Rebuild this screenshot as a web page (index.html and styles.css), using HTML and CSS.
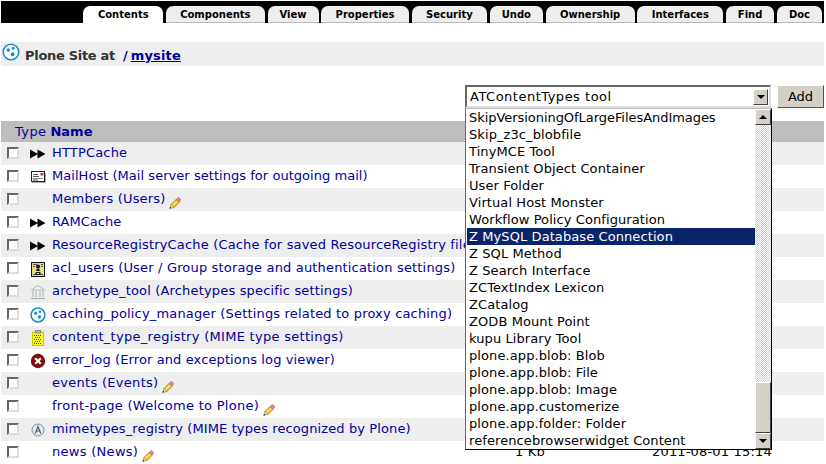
FILE: index.html
```html
<!DOCTYPE html>
<html lang="en">
<head>
<meta charset="utf-8">
<title>Plone Site at /mysite</title>
<link rel="stylesheet" href="styles.css">
</head>
<body>
<svg class="defs" width="0" height="0" aria-hidden="true">
  <symbol id="i-ff" viewBox="0 0 16 16"><path d="M0 3.500l8 4.500-8 4.500zM7.500 3.500l8 4.500-8 4.500z" fill="#000"/></symbol>
  <symbol id="i-mail" viewBox="0 0 16 16"><rect x="1.500" y="2.500" width="13" height="10" fill="#fff" stroke="#222"/><path d="M3 9.500h10" stroke="#888"/><path d="M3 5.500h5M3 7.500h6M3 11h5" stroke="#555"/><rect x="10.500" y="4" width="3" height="2.500" fill="#c33"/><path d="M2 13.500h13.500V4" stroke="#aaa" fill="none"/></symbol>
  <symbol id="i-pencil" viewBox="0 0 12 12"><path d="M2 7.500L7 2.500l3 3-5 5z" fill="#f5c82e" stroke="#7e6a18" stroke-width=".7"/><path d="M3.500 8.500L8 4" stroke="#fff2a0"/><path d="M7.300 2.200L8.800.8a1 1 0 0 1 1.400 0l1.300 1.300a1 1 0 0 1 0 1.400l-1.300 1.500z" fill="#e58c8c" stroke="#8a5a50" stroke-width=".5"/><path d="M2 7.500L.6 11.500 5 10.500z" fill="#ead9b0" stroke="#8a7a50" stroke-width=".5"/><path d="M.6 11.500l.5-1.800 1.300 1.200z" fill="#222"/></symbol>
  <symbol id="i-acl" viewBox="0 0 16 16"><rect x="1.500" y="1.500" width="13" height="14" fill="#e8dc7a" stroke="#111"/><path d="M3 3.500h4M3 5.500h2M11 3.500h2M11 5.500h2M3 13.500h2M11 13.500h2" stroke="#555"/><circle cx="8" cy="5.500" r="2" fill="#111"/><path d="M5 14l1.800-6.500h2.400L11 14z" fill="#222"/><path d="M6 10.500h4M7 12.500h2" stroke="#e8dc7a"/></symbol>
  <symbol id="i-arch" viewBox="0 0 16 16"><path d="M8 1.500l6.500 4.500h-13z" fill="#f1f5f1" stroke="#a8bab2"/><path d="M3 7v6M6 7v6M10 7v6M13 7v6" stroke="#a9bdb4" stroke-width="1.200"/><path d="M1 14.500h14" stroke="#9bb0a8"/></symbol>
  <symbol id="i-plone" viewBox="0 0 16 16"><circle cx="8" cy="8" r="6.900" fill="#fff" stroke="#1d8fc9" stroke-width="1.500"/><circle cx="5.600" cy="6.300" r="1.600" fill="#1d8fc9"/><circle cx="10" cy="4.800" r="1.300" fill="#1d8fc9"/><circle cx="9.400" cy="10" r="1.700" fill="#1d8fc9"/></symbol>
  <symbol id="i-ctr" viewBox="0 0 16 16"><rect x="2.500" y="2" width="11" height="13.500" fill="#fdfd22" stroke="#c8c800"/><rect x="5.500" y=".5" width="5" height="2.500" fill="#bbb" stroke="#888"/><path d="M4 5.500h8M5 7.500h6M4 9.500h8M5 11.500h6M4 13.500h7" stroke="#2a3a90" stroke-dasharray="1 1"/></symbol>
  <symbol id="i-err" viewBox="0 0 16 16"><circle cx="8" cy="8" r="7.200" fill="#7d0f0f"/><path d="M5.200 5.200l5.600 5.600M10.800 5.200l-5.600 5.600" stroke="#fff" stroke-width="2.200"/></symbol>
  <symbol id="i-mime" viewBox="0 0 16 16"><circle cx="8" cy="8" r="6" fill="#dfe7ec" stroke="#7c8f9c"/><path d="M5.200 11.500L8 4.500l2.800 7M6.200 9h3.600" fill="none" stroke="#4a5a68" stroke-width="1.100"/></symbol>
</svg>

<nav class="tabs">
  <a class="tab active">Contents</a>
  <a class="tab">Components</a>
  <a class="tab short">View</a>
  <a class="tab">Properties</a>
  <a class="tab">Security</a>
  <a class="tab short">Undo</a>
  <a class="tab">Ownership</a>
  <a class="tab">Interfaces</a>
  <a class="tab short">Find</a>
  <a class="tab short">Doc</a>
</nav>

<h1 class="title">
  <svg class="title-icon"><use href="#i-plone"/></svg>
  <span class="title-text">Plone Site at</span>
  <span class="path">/<a>mysite</a></span>
</h1>

<form class="add">
  <div class="select">
    <span class="select-value">ATContentTypes tool</span>
    <span class="sb-btn select-btn"><i class="arrow-down"></i></span>
    <div class="popup">
      <ul class="options">
        <li class="tight">SkipVersioningOfLargeFilesAndImages</li>
        <li>Skip_z3c_blobfile</li>
        <li>TinyMCE Tool</li>
        <li>Transient Object Container</li>
        <li>User Folder</li>
        <li>Virtual Host Monster</li>
        <li>Workflow Policy Configuration</li>
        <li class="selected">Z MySQL Database Connection</li>
        <li>Z SQL Method</li>
        <li>Z Search Interface</li>
        <li>ZCTextIndex Lexicon</li>
        <li>ZCatalog</li>
        <li>ZODB Mount Point</li>
        <li>kupu Library Tool</li>
        <li>plone.app.blob: Blob</li>
        <li>plone.app.blob: File</li>
        <li>plone.app.blob: Image</li>
        <li>plone.app.customerize</li>
        <li>plone.app.folder: Folder</li>
        <li>referencebrowserwidget Content</li>
      </ul>
      <div class="scrollbar">
        <span class="sb-btn"><i class="arrow-up"></i></span>
        <span class="track"></span>
        <span class="sb-btn thumb"></span>
        <span class="sb-btn"><i class="arrow-down"></i></span>
      </div>
    </div>
  </div>
  <button class="add-btn" type="button">Add</button>
</form>

<div class="head"><a class="type">Type</a><a class="name">Name</a></div>

<div class="rows">
  <div class="row"><span class="cb"></span><svg class="ico"><use href="#i-ff"/></svg><a>HTTPCache</a></div>
  <div class="row"><span class="cb"></span><svg class="ico"><use href="#i-mail"/></svg><a class="tight">MailHost (Mail server settings for outgoing mail)</a></div>
  <div class="row"><span class="cb"></span><span class="ico"></span><a>Members (Users)</a><svg class="pencil"><use href="#i-pencil"/></svg></div>
  <div class="row"><span class="cb"></span><svg class="ico"><use href="#i-ff"/></svg><a class="tight">RAMCache</a></div>
  <div class="row"><span class="cb"></span><svg class="ico"><use href="#i-ff"/></svg><a>ResourceRegistryCache (Cache for saved ResourceRegistry files)</a></div>
  <div class="row"><span class="cb"></span><svg class="ico"><use href="#i-acl"/></svg><a>acl_users (User / Group storage and authentication settings)</a></div>
  <div class="row"><span class="cb"></span><svg class="ico"><use href="#i-arch"/></svg><a>archetype_tool (Archetypes specific settings)</a></div>
  <div class="row"><span class="cb"></span><svg class="ico"><use href="#i-plone"/></svg><a>caching_policy_manager (Settings related to proxy caching)</a></div>
  <div class="row"><span class="cb"></span><svg class="ico"><use href="#i-ctr"/></svg><a class="wide">content_type_registry (MIME type settings)</a></div>
  <div class="row"><span class="cb"></span><svg class="ico"><use href="#i-err"/></svg><a class="mid">error_log (Error and exceptions log viewer)</a></div>
  <div class="row"><span class="cb"></span><span class="ico"></span><a class="wide">events (Events)</a><svg class="pencil"><use href="#i-pencil"/></svg></div>
  <div class="row"><span class="cb"></span><span class="ico"></span><a class="wide">front-page (Welcome to Plone)</a><svg class="pencil"><use href="#i-pencil"/></svg></div>
  <div class="row"><span class="cb"></span><svg class="ico"><use href="#i-mime"/></svg><a class="mid">mimetypes_registry (MIME types recognized by Plone)</a></div>
  <div class="row"><span class="cb"></span><span class="ico"></span><a class="wide">news (News)</a><svg class="pencil"><use href="#i-pencil"/></svg><span class="size">1 Kb</span><span class="date">2011-08-01 15:14</span></div>
</div>
</body>
</html>
```
FILE: styles.css
```css
* { box-sizing: border-box; }
html, body { height: 464px; overflow: hidden; }
body {
  margin: 0;
  padding: 1px 2px 0 1px;
  background: #fff;
  font-family: "DejaVu Sans", Verdana, sans-serif;
  font-size: 13px;
  color: #000;
}
.defs { position: absolute; }

/* tabs */
.tabs {
  display: flex;
  justify-content: flex-end;
  align-items: flex-end;
  gap: 2.5px;
  height: 22px;
  padding-right: 2px;
  background: #000;
}
.tab {
  display: flex;
  align-items: center;
  justify-content: center;
  height: 17px;
  padding: 0 14.5px;
  border-radius: 7px 7px 0 0;
  border-bottom: 1px solid #bbb;
  background: #eee;
  font-size: 10px;
  font-weight: bold;
}
.tab.short { padding: 0 12px; }
.tab.active { padding: 0 14.5px; background: #fff; border-bottom-color: #fff; }

/* title */
.title {
  display: flex;
  align-items: center;
  height: 24px;
  margin: 19px 0 0;
  padding-top: 2px;
  background: #eee;
  font-size: 13px;
  font-weight: bold;
  color: #333;
}
.title-icon { width: 18px; height: 18px; margin: -6px 5px 0 1px; flex: none; }
.title-text { letter-spacing: -.3px; }
.path { margin-left: 8px; color: #000099; }
.path a { text-decoration: underline; margin-left: 3px; letter-spacing: .15px; }

/* add form */
.add {
  display: flex;
  justify-content: flex-end;
  gap: 6px;
  height: 23px;
  margin-top: 19px;
}
.select {
  position: relative;
  display: flex;
  align-items: center;
  justify-content: space-between;
  width: 306px;
  border: 2px solid;
  border-color: #666 #ddd #ddd #666;
  padding: 0 1px 0 3px;
}
.select-value { white-space: nowrap; letter-spacing: .5px; }
.select-btn { width: 15px; height: 16px; }
.add-btn {
  width: 47px;
  height: 23px;
  padding: 0;
  border: 1px solid;
  border-color: #fff #555 #555 #fff;
  background: #d4d0c8;
  font: 13px "DejaVu Sans", Verdana, sans-serif;
  color: #000;
}
.sb-btn {
  display: flex;
  align-items: center;
  justify-content: center;
  flex: none;
  background: #d4d0c8;
  border: 1px solid;
  border-color: #fff #404040 #404040 #fff;
}
.arrow-down, .arrow-up { width: 0; height: 0; border-left: 4px solid transparent; border-right: 4px solid transparent; }
.arrow-down { border-top: 4px solid #000; }
.arrow-up { border-bottom: 4px solid #000; }

/* open dropdown */
.popup {
  position: absolute;
  z-index: 5;
  top: 21px;
  left: -2px;
  width: 307px;
  height: 342px;
  display: flex;
  background: #fff;
  border: 1px solid #000;
  border-left-color: #666;
  border-top-color: #bbb;
}
.options {
  list-style: none;
  margin: 0;
  padding: 0 0 0 1px;
  flex: 1;
  min-width: 0;
}
.options li { height: 17px; line-height: 17px; padding-left: 2px; white-space: nowrap; letter-spacing: .09px; }
.options li.tight { letter-spacing: -.05px; }
.options .selected { background: #0a246a; color: #fff; }
.scrollbar { display: flex; flex-direction: column; width: 16px; flex: none; }
.scrollbar .sb-btn { height: 16px; }
.track {
  flex: 1;
  background: repeating-conic-gradient(#d4d0c8 0 25%, #fff 0 50%) 0 0 / 2px 2px;
}
.scrollbar .thumb { height: 51px; }

/* listing */
.head {
  display: flex;
  gap: 4px;
  height: 21px;
  margin-top: 13px;
  padding-left: 14px;
  line-height: 21px;
  background: #bdbdbd;
  color: #000099;
}
.head .type { letter-spacing: .4px; }
.head .name { font-weight: bold; }
.row {
  position: relative;
  display: flex;
  align-items: center;
  height: 23px;
  color: #000099;
  white-space: nowrap;
}
.row:nth-child(odd) { background: #eee; }
.row a { padding-bottom: 2px; letter-spacing: .17px; }
.row a.tight { letter-spacing: .04px; }
.row a.mid { letter-spacing: .11px; }
.row a.wide { letter-spacing: .29px; }
.cb {
  width: 12px;
  height: 12px;
  margin: 0 0 1px 6px;
  flex: none;
  border: 2px solid;
  border-color: #666 #ddd #ddd #666;
  background: #fff;
}
.ico { width: 16px; height: 16px; margin: 0 6px 0 11px; flex: none; }
.pencil { width: 12px; height: 12px; margin: 6px 0 0 4px; flex: none; }
.size, .date { position: absolute; color: #000; padding-bottom: 2px; letter-spacing: .17px; }
.size { left: 514px; }
.date { left: 651px; }
```
